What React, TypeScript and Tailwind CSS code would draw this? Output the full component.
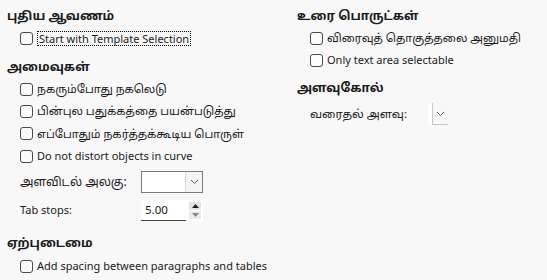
import React from "react";

const font = { fontFamily: '"Noto Sans", "Noto Sans Tamil", "Open Sans", sans-serif' };

function Box() {
  return <span className="inline-block w-[13px] h-[13px] rounded-[3px] border border-[#4a4a4a] bg-[#fbfbfb] shrink-0" />;
}

function Check({ label, focus = false, ta = false, className = "" }: { label: string; focus?: boolean; ta?: boolean; className?: string }) {
  return (
    <div className={"flex items-center h-[22px] gap-[4px] " + className}>
      <Box />
      {focus ? (
        <span className="border border-dotted border-black px-[1px] leading-[13px] py-[0px]">{label}</span>
      ) : (
        <span className={"whitespace-nowrap " + (ta ? "text-[11.3px] leading-[16px]" : "")}>{label}</span>
      )}
    </div>
  );
}

function Chevron() {
  return (
    <svg width="9" height="6" viewBox="0 0 9 6" className="block">
      <path d="M1 1 L4.5 4.5 L8 1" fill="none" stroke="#555" strokeWidth="1" />
    </svg>
  );
}

function Heading({ children, className = "" }: { children: React.ReactNode; className?: string }) {
  return <div className={"h-5 flex items-center font-bold text-[12.4px] whitespace-nowrap " + className}>{children}</div>;
}

export default function App() {
  return (
    <div className="w-[547px] h-[280px] bg-[#f8f8f8] text-[#1a1a1a] text-[11px] flex overflow-hidden" style={font}>
      <div className="w-[290px] pl-[7px] pt-[6px] flex flex-col">
        <Heading>புதிய ஆவணம்</Heading>
        <div className="pl-[13px] mt-[1px]">
          <Check label="Start with Template Selection" focus />
        </div>
        <Heading className="mt-[8px]">அமைவுகள்</Heading>
        <div className="pl-[13px] mt-[1px] flex flex-col">
          <Check label="நகரும்போது நகலெடு" ta />
          <Check label="பின்புல பதுக்கத்தை பயன்படுத்து" ta />
          <Check label="எப்போதும் நகர்த்தக்கூடிய பொருள்" ta className="h-[23px]" />
          <Check label="Do not distort objects in curve" className="h-[23px]" />
          <div className="flex items-center h-[28px]">
            <span className="w-[121px] text-[12px] whitespace-nowrap">அளவிடல் அலகு:</span>
            <div className="w-[62px] h-[22px] border border-[#7a7a7a] bg-white flex">
              <div className="flex-1" />
              <div className="w-[17px] h-full bg-[#f5f5f5] border-l border-[#dcdcdc] flex items-center justify-center">
                <Chevron />
              </div>
            </div>
          </div>
          <div className="flex items-center h-[28px]">
            <span className="w-[121px]">Tab stops:</span>
            <div className="w-[62px] h-[21px] bg-white flex items-stretch relative">
              <div className="flex-1 flex items-center pl-[4px] border-b border-[#444] mr-[3px] text-[11.5px]">5.00</div>
              <div className="w-[14px] flex flex-col justify-center gap-[1px] pr-[2px] py-[2px]">
                <div className="flex-1 bg-[#e4e4e4] flex items-center justify-center">
                  <svg width="7" height="4" viewBox="0 0 7 4"><path d="M0 4 L3.5 0 L7 4 Z" fill="#222" /></svg>
                </div>
                <div className="flex-1 bg-[#ececec] flex items-center justify-center">
                  <svg width="7" height="4" viewBox="0 0 7 4"><path d="M0 0 L3.5 4 L7 0 Z" fill="#888" /></svg>
                </div>
              </div>
            </div>
          </div>
        </div>
        <Heading className="mt-[9px]">ஏற்புடைமை</Heading>
        <div className="pl-[13px] mt-[2px]">
          <Check label="Add spacing between paragraphs and tables" />
        </div>
      </div>
      <div className="flex-1 pl-[7px] pt-[6px] flex flex-col">
        <Heading>உரை பொருட்கள்</Heading>
        <div className="pl-[13px] mt-[1px] flex flex-col">
          <Check label="விரைவுத் தொகுத்தலை அனுமதி" ta />
          <Check label="Only text area selectable" className="h-[23px]" />
        </div>
        <Heading className="mt-[6px]">அளவுகோல்</Heading>
        <div className="pl-[13px] flex items-center h-[30px] mt-[1px]">
          <span className="w-[118px] text-[11.6px] whitespace-nowrap">வரைதல் அளவு:</span>
          <div className="h-[22px] flex">
            <div className="w-[4px] bg-white" />
            <div className="w-[16px] bg-[#f7f7f7] border-l border-b border-[#c8c8c8] flex items-center justify-center">
              <Chevron />
            </div>
          </div>
        </div>
      </div>
    </div>
  );
}
